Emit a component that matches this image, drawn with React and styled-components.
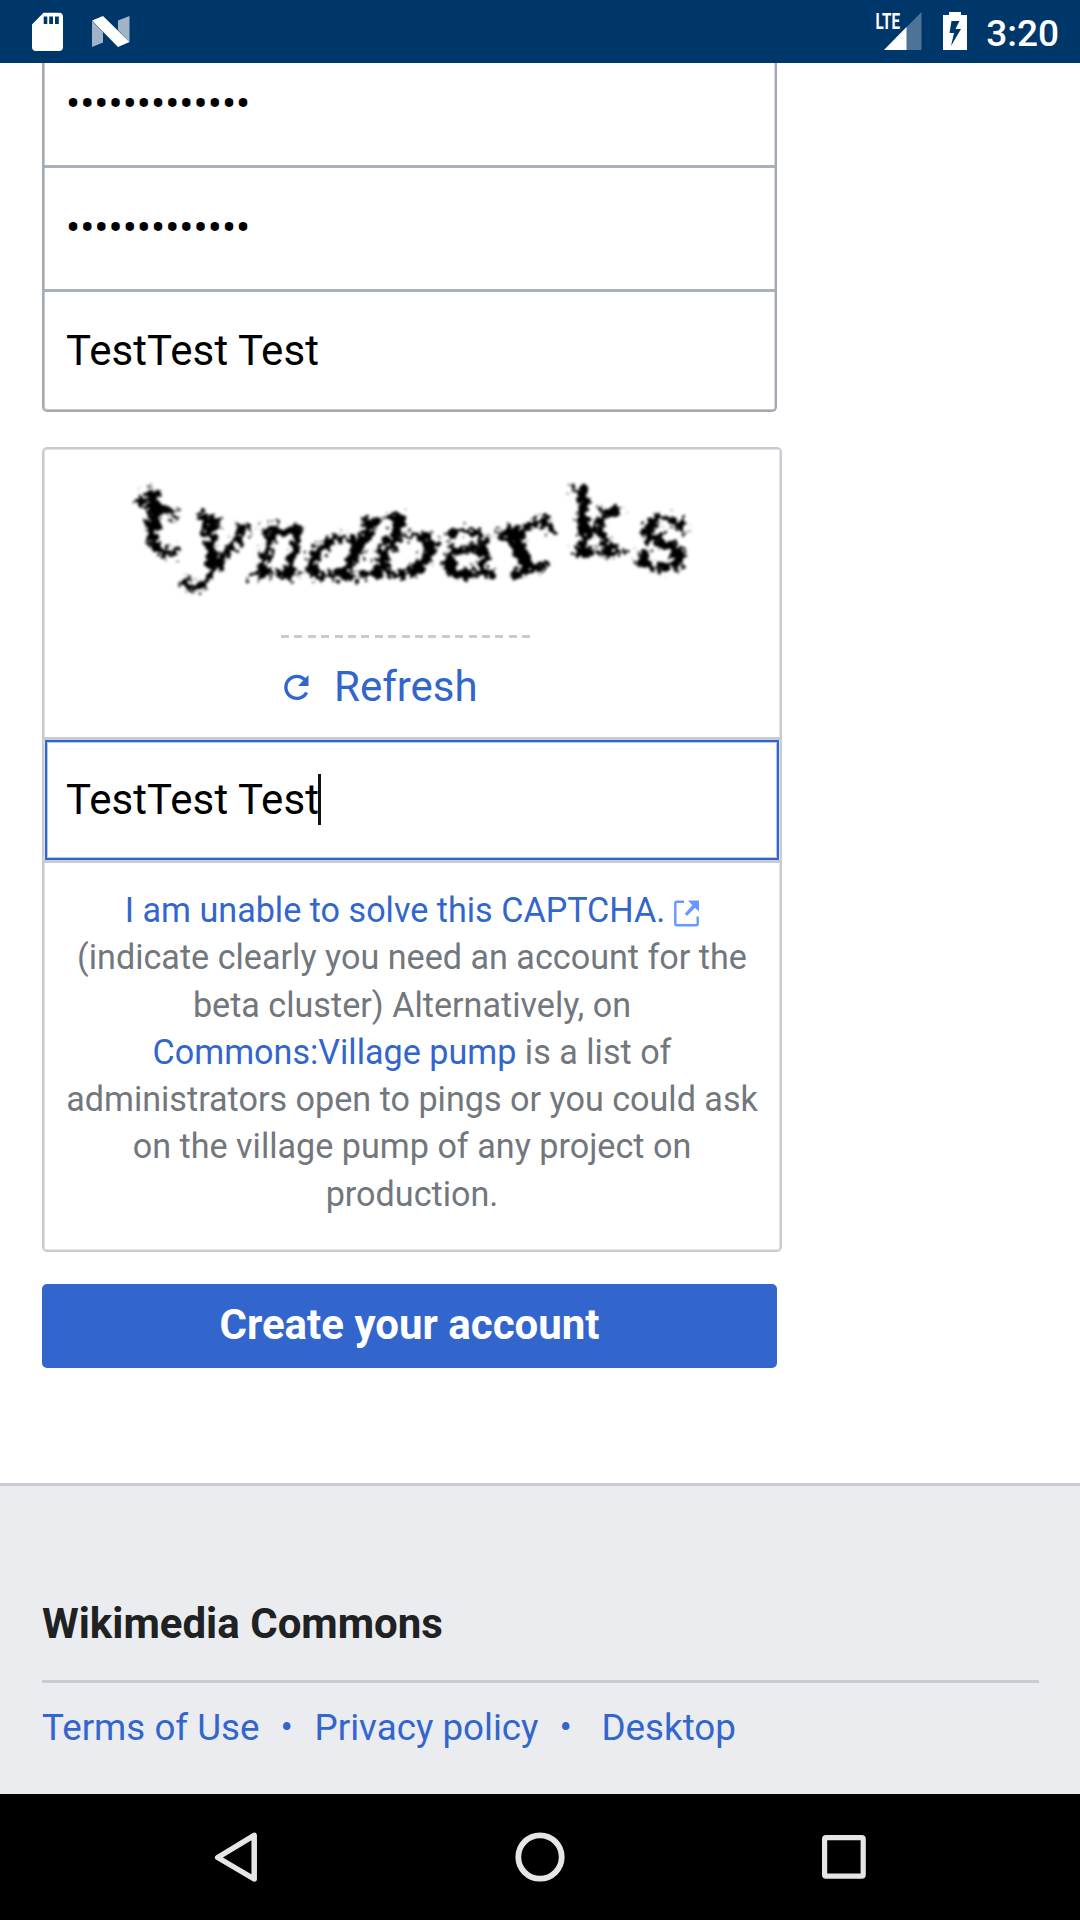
import React from "react";
import styled, { createGlobalStyle, css } from "styled-components";

const GlobalStyle = createGlobalStyle`
  *, *::before, *::after { box-sizing: border-box; }
  body { margin: 0; background: #fff; font-family: Roboto, "Liberation Sans", sans-serif; }
`;

const Screen = styled.div`
  display: flex;
  flex-direction: column;
  width: 1080px;
  height: 1920px;
  overflow: hidden;
  background: #fff;
`;

const StatusBar = styled.header`
  flex: none;
  height: 63px;
  display: flex;
  align-items: flex-start;
  justify-content: space-between;
  padding: 12px 21px 0 32px;
  background: #00376b;
  color: #fff;
`;

const StatusGroup = styled.div`
  display: flex;
  align-items: flex-start;
  gap: ${(p) => p.$gap}px;
`;

const Clock = styled.span`
  margin-left: -1px;
  font-size: 37px;
  font-weight: 500;
  line-height: 43px;
`;

const Icon = styled.svg`
  display: block;
  flex: none;
  overflow: visible;
`;

const Page = styled.main`
  flex: none;
  height: 1420px;
  display: flex;
  flex-direction: column;
  align-items: flex-start;
  padding-left: 42px;
`;

const Fields = styled.div`
  width: 735px;
  display: flex;
  flex-direction: column;
  border: solid #a2a9b1;
  border-width: 0 2px 2px;
  border-radius: 0 0 5px 5px;
  box-shadow: inset 1px -1px 0 #c6cace, inset -1px 0 0 #d6d9dc;
`;

const Field = styled.div`
  height: ${(p) => p.$height}px;
  display: flex;
  align-items: center;
  padding-left: 22px;
  padding-bottom: ${(p) => p.$bottom || 0}px;
  font-size: 42px;
  line-height: 50px;
  letter-spacing: ${(p) => p.$spacing || 0}px;
  color: #000;
  ${(p) => p.$divided && css`border-bottom: 3px solid #a9b0b7;`}
`;

const CaptchaCard = styled.section`
  width: 740px;
  height: 805px;
  margin-top: 35px;
  border: 2px solid #c8ccd1;
  border-radius: 5px;
  box-shadow: inset 1px 1px 0 #dfe2e5, inset -1px -1px 0 #e3e5e8;
  display: flex;
  flex-direction: column;
`;

const CaptchaTop = styled.div`
  height: 288px;
  display: flex;
  flex-direction: column;
  align-items: flex-start;
`;

const CaptchaImage = styled.svg`
  display: block;
  width: 736px;
  height: 186px;
`;

const Dashes = styled.div`
  width: 250px;
  height: 3px;
  margin-left: 237px;
  background: repeating-linear-gradient(90deg, #c8ccd1 0 8px, transparent 8px 13.4px);
`;

const RefreshLink = styled.a`
  display: flex;
  align-items: center;
  gap: 24px;
  margin: 24px 0 0 239px;
  font-size: 42px;
  line-height: 50px;
  color: #36c;
`;

const AnswerRow = styled.div`
  height: 126px;
  border: solid #c8ccd1;
  border-width: 3px 0;
  padding: 0 1px;
`;

const AnswerInput = styled.div`
  height: 120px;
  display: flex;
  align-items: center;
  padding: 0 0 1px 19px;
  border: 2px solid #36c;
  box-shadow: inset 0 0 0 1px #b3c6ec;
  font-size: 42px;
  line-height: 50px;
  letter-spacing: 0.1px;
  color: #000;
`;

const Caret = styled.span`
  width: 3px;
  height: 51px;
  margin-left: -1.5px;
  background: #111;
`;

const Help = styled.div`
  padding-top: 24px;
  text-align: center;
  color: #72777d;
  font-size: 34.15px;
  line-height: 47.25px;
  white-space: nowrap;
`;

const HelpLine = styled.div`
  display: flex;
  justify-content: center;
  align-items: center;
  white-space: pre;
`;

const Link = styled.a`
  color: #36c;
`;

const ExternalIcon = styled(Icon)`
  margin: 6px 0 0 9px;
`;

const SubmitButton = styled.button`
  width: 735px;
  height: 84px;
  margin: 32px 0 0;
  padding: 0 0 3px;
  border: 0;
  border-radius: 5px;
  background: #36c;
  color: #fff;
  font: 700 42px/50px Roboto, "Liberation Sans", sans-serif;
`;

const Footer = styled.footer`
  flex: none;
  height: 311px;
  padding: 113px 41px 0 42px;
  border-top: 3px solid #c8ccd1;
  background: #eaecf0;
`;

const FooterTitle = styled.h2`
  margin: 0;
  height: 84px;
  border-bottom: 3px solid #c8ccd1;
  color: #202122;
  font-size: 42px;
  font-weight: 700;
  line-height: 50px;
`;

const FooterLinks = styled.nav`
  display: flex;
  padding-top: 23px;
  font-size: 36.75px;
  line-height: 44px;
  color: #36c;
`;

const Dot = styled.span`
  width: ${(p) => p.$width}px;
  padding-left: 21px;
`;

const NavBar = styled.nav`
  flex: none;
  height: 126px;
  display: flex;
  justify-content: center;
  align-items: center;
  gap: 240px;
  background: #000;
`;

const letters = [
  { c: "t", x: 92, y: 92, r: 0, sx: 1.12, sy: 0.9, kx: 0, ky: 24 },
  { c: "y", x: 142, y: 116, r: 16, sx: 0.98, sy: 1.06, kx: 0, ky: 0 },
  { c: "n", x: 203, y: 126, r: 3, sx: 0.84, sy: 0.98, kx: -12, ky: 0 },
  { c: "d", x: 250, y: 126, r: 5, sx: 1.02, sy: 0.84, kx: -24, ky: 0 },
  { c: "b", x: 313, y: 127, r: 0, sx: 1.16, sy: 0.82, kx: -24, ky: 0 },
  { c: "a", x: 395, y: 126, r: 2, sx: 1, sy: 0.92, kx: 0, ky: 0 },
  { c: "r", x: 464, y: 130, r: -16, sx: 1.28, sy: 0.94, kx: 4, ky: 0 },
  { c: "k", x: 525, y: 106, r: 0, sx: 0.9, sy: 0.92, kx: 0, ky: 0 },
  { c: "s", x: 588, y: 116, r: 7, sx: 1.12, sy: 1, kx: 0, ky: 0 },
];

function Captcha() {
  return (
    <CaptchaImage viewBox="0 0 736 186">
      <defs>
        <filter id="rough" x="0" y="0" width="736" height="186" filterUnits="userSpaceOnUse">
          <feTurbulence type="fractalNoise" baseFrequency="0.16" numOctaves="3" seed="7" result="noise" />
          <feDisplacementMap in="SourceGraphic" in2="noise" scale="20" xChannelSelector="R" yChannelSelector="G" />
          <feGaussianBlur stdDeviation="1.6" />
        </filter>
      </defs>
      <g filter="url(#rough)" fontFamily='"DejaVu Serif", serif' fontSize="98" fill="#000" stroke="#000" strokeWidth="2.5">
        {letters.map((l) => (
          <text
            key={l.c}
            transform={`translate(${l.x} ${l.y}) rotate(${l.r}) skewX(${l.kx}) skewY(${l.ky}) scale(${l.sx} ${l.sy})`}
          >
            {l.c}
          </text>
        ))}
      </g>
    </CaptchaImage>
  );
}

const password = "•".repeat(13);

export default function App() {
  return (
    <Screen>
      <GlobalStyle />
      <StatusBar>
        <StatusGroup $gap={28}>
          <Icon width="31" height="39" viewBox="0 0 31 39">
            <path fill="#fff" fillRule="evenodd" d="M11.5.7H27a4 4 0 0 1 4 4V35a4 4 0 0 1-4 4H4a4 4 0 0 1-4-4V12.5ZM11.7 4.5V12H15.3V4.5ZM17.2 4.5V12H21V4.5ZM23 4.5V12H26.8V4.5Z" />
          </Icon>
          <Icon width="39" height="39" viewBox="0 0 39 39">
            <path fill="#9fb3c9" d="M1 9L12 20V30.5L1 35ZM27 8.5L38.5 4V30L27 18Z" />
            <path fill="#fff" d="M1 8.5L12 4L38.5 30L27 35Z" />
          </Icon>
        </StatusGroup>
        <StatusGroup $gap={20}>
          <Icon width="47" height="39" viewBox="0 0 47 39">
            <path fill="#4d7397" d="M45.5 0V38H8Z" />
            <path fill="#fff" d="M30.5 15V38H8Z" />
            <path fill="#00376b" d="M0 0H26V18H0Z" />
            <text x="-0.5" y="17.3" fill="#fff" fontFamily="Roboto, sans-serif" fontWeight="700" fontSize="22.5" textLength="24.5" lengthAdjust="spacingAndGlyphs">LTE</text>
          </Icon>
          <Icon width="24" height="38" viewBox="0 0 24 38">
            <path fill="#fff" fillRule="evenodd" d="M6 0H18V3H24V38H0V3H6ZM8.5 9L6.5 21H11L8 34L18 17H12.5L16.5 9Z" />
          </Icon>
          <Clock>3:20</Clock>
        </StatusGroup>
      </StatusBar>

      <Page>
        <Fields>
          <Field $height={105} $divided $bottom={20}>{password}</Field>
          <Field $height={124} $divided $bottom={1}>{password}</Field>
          <Field $height={118} $spacing={0.1} $bottom={1}>TestTest Test</Field>
        </Fields>

        <CaptchaCard>
          <CaptchaTop>
            <Captcha />
            <Dashes />
            <RefreshLink>
              <Icon width="27" height="27" viewBox="0 0 27 27">
                <path fill="none" stroke="#36c" strokeWidth="3.4" d="M22.3 6.3A11 11 0 1 0 23.6 18.5" />
                <path fill="#36c" d="M25.5 1V12H15Z" />
              </Icon>
              Refresh
            </RefreshLink>
          </CaptchaTop>
          <AnswerRow>
            <AnswerInput>
              TestTest Test
              <Caret />
            </AnswerInput>
          </AnswerRow>
          <Help>
            <HelpLine>
              <Link>I am unable to solve this CAPTCHA.</Link>
              <ExternalIcon width="25" height="27" viewBox="0 0 25 27">
                <path fill="none" stroke="#69f" strokeWidth="2.4" d="M10 1.8H3Q1.3 1.8 1.3 3.5V23.5Q1.3 25.2 3 25.2H22Q23.7 25.2 23.7 23.5V16.5" />
                <path fill="#69f" d="M14 0.5H25V11.5L21 7.8L13 16L10.8 13.8L18.3 5.2Z" />
              </ExternalIcon>
            </HelpLine>
            <HelpLine>(indicate clearly you need an account for the</HelpLine>
            <HelpLine>beta cluster) Alternatively, on</HelpLine>
            <HelpLine><Link>Commons:Village pump</Link> is a list of</HelpLine>
            <HelpLine>administrators open to pings or you could ask</HelpLine>
            <HelpLine>on the village pump of any project on</HelpLine>
            <HelpLine>production.</HelpLine>
          </Help>
        </CaptchaCard>

        <SubmitButton>Create your account</SubmitButton>
      </Page>

      <Footer>
        <FooterTitle>Wikimedia Commons</FooterTitle>
        <FooterLinks>
          <Link>Terms of Use</Link>
          <Dot $width={55}>•</Dot>
          <Link>Privacy policy</Link>
          <Dot $width={63}>•</Dot>
          <Link>Desktop</Link>
        </FooterLinks>
      </Footer>

      <NavBar>
        <Icon width="64" height="64" viewBox="0 0 64 64">
          <path fill="none" stroke="#e6e6e6" strokeWidth="5.5" strokeLinejoin="round" d="M13.7 32.5L50.2 10.3V54Z" />
        </Icon>
        <Icon width="64" height="64" viewBox="0 0 64 64">
          <circle cx="32" cy="32" r="21.7" fill="none" stroke="#e6e6e6" strokeWidth="5.8" />
        </Icon>
        <Icon width="64" height="64" viewBox="0 0 64 64">
          <rect x="12.6" y="12.6" width="38.6" height="38.6" rx="1.5" fill="none" stroke="#e6e6e6" strokeWidth="5.2" />
        </Icon>
      </NavBar>
    </Screen>
  );
}
